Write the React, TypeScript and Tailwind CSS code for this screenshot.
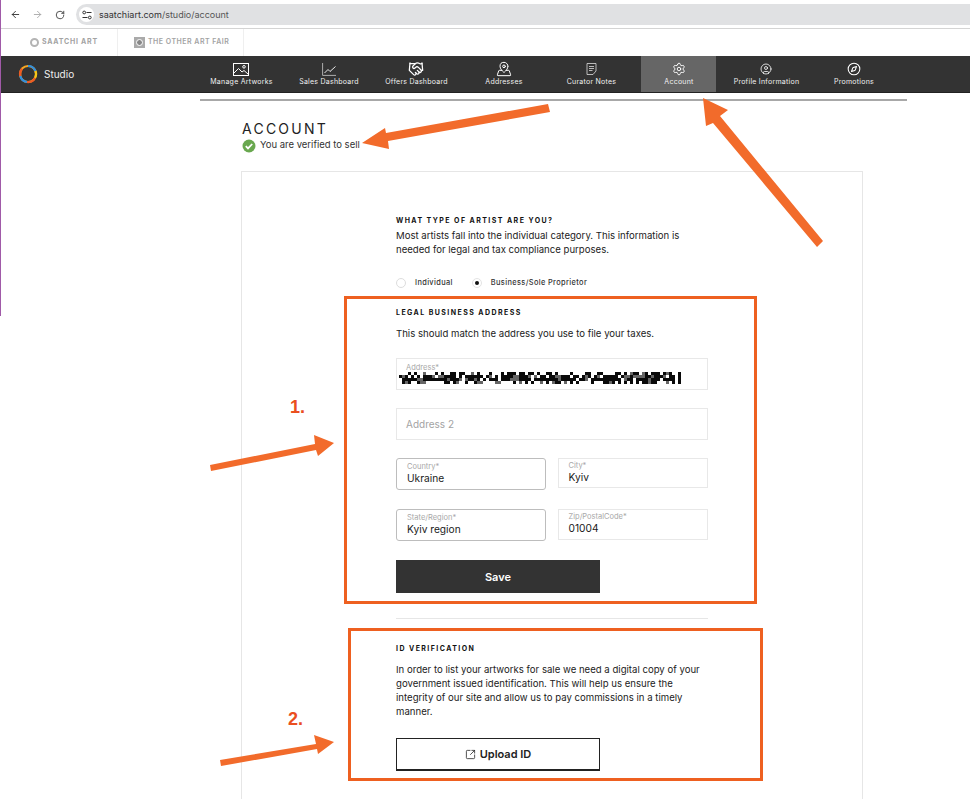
import React from "react";
import { ArrowLeft, ArrowRight, RotateCw, Handshake, MapPinned, Settings, CircleUser, Compass, SquareArrowOutUpRight } from "lucide-react";

const font = { fontFamily: "Inter, 'Liberation Sans', sans-serif" };

function ImageIcon() {
  return (
    <svg width="16" height="13" viewBox="0 0 16 13" fill="none" stroke="white" strokeWidth="1">
      <rect x="0.5" y="0.5" width="15" height="12" />
      <path d="M1 10 L5.5 5.5 L9 9 L11 7.5 L15 11" />
      <circle cx="11" cy="3.8" r="1.3" />
    </svg>
  );
}
function ChartIcon() {
  return (
    <svg width="14" height="13" viewBox="0 0 14 13" fill="none" stroke="white" strokeWidth="0.9">
      <path d="M0.6 0 V12.4 H14" stroke="#bbb" />
      <path d="M2.5 10 L6 6.5 L8 8.5 L13.5 3.5" />
    </svg>
  );
}
function NotesIcon() {
  return (
    <svg width="11" height="12" viewBox="0 0 11 12" fill="none" stroke="#ddd" strokeWidth="0.8">
      <path d="M1 0.5 H10 V8 L7 11.5 H1 Z" />
      <path d="M3 3.5 H8 M3 5.5 H8 M3 7.5 H6.5" />
    </svg>
  );
}
function TuneIcon() {
  return (
    <svg width="10" height="10" viewBox="0 0 10 10" fill="none" stroke="#333" strokeWidth="1">
      <circle cx="2.2" cy="2.5" r="1.4" />
      <path d="M4.5 2.5 H9.5 M0.5 7.5 H5.5" />
      <circle cx="7.8" cy="7.5" r="1.4" />
    </svg>
  );
}
function Logo() {
  return (
    <svg width="20" height="20" viewBox="0 0 20 20" fill="none" strokeWidth="2.2">
      <circle cx="10" cy="10" r="8" stroke="#f5a623" />
      <path d="M10 2 A8 8 0 0 1 17.5 7" stroke="#2f8fe0" />
      <path d="M17.5 7 A8 8 0 0 1 17 14" stroke="#f5c518" />
      <path d="M17 14 A8 8 0 0 1 9 18" stroke="#ee5a24" />
      <path d="M9 18 A8 8 0 0 1 2.3 12" stroke="#2f8fe0" />
      <path d="M2.3 12 A8 8 0 0 1 4 4.7" stroke="#ee5a24" />
    </svg>
  );
}

const navItems: { label: string; icon: React.ReactNode; active?: boolean }[] = [
  { label: "Manage Artworks", icon: <ImageIcon /> },
  { label: "Sales Dashboard", icon: <ChartIcon /> },
  { label: "Offers Dashboard", icon: <Handshake size={16} color="white" strokeWidth={1.9} /> },
  { label: "Addresses", icon: <MapPinned size={16} color="white" strokeWidth={1.5} /> },
  { label: "Curator Notes", icon: <NotesIcon /> },
  { label: "Account", icon: <Settings size={14} color="white" strokeWidth={1.6} />, active: true },
  { label: "Profile Information", icon: <CircleUser size={12} color="white" strokeWidth={1.6} /> },
  { label: "Promotions", icon: <Compass size={14} color="white" strokeWidth={1.8} /> },
];

function Censored() {
  const cols = 94;
  const rects: React.ReactNode[] = [];
  let seed = 17;
  for (let r = 0; r < 4; r++) {
    for (let c = 0; c < cols; c++) {
      seed = (seed * 1103515245 + 12345) & 0x7fffffff;
      const v = (seed >> 8) % 100;
      const threshold = r === 1 || r === 2 ? 84 : 50;
      if (v < threshold) rects.push(<rect key={r + "-" + c} x={c * 3} y={r * 3} width="3" height="3" fill={v % 6 === 0 ? "#666" : "#0a0a0a"} />);
    }
  }
  return (
    <svg width="282" height="12" viewBox="0 0 282 12" shapeRendering="crispEdges">
      {rects}
    </svg>
  );
}

function Field({ label, value, rounded, className }: { label: string; value: string; rounded?: boolean; className: string }) {
  return (
    <div className={`${className} flex flex-col justify-center border pb-[2px] ${rounded ? "rounded-[3px] border-[#bdbdbd] pl-[10px]" : "border-[#e8e8e8] pl-[9.5px]"}`}>
      <div className="text-[7.5px] leading-[9px] text-[#a8a8a8]">{label}</div>
      <div className="text-[10.2px] leading-[14px] text-[#1a1a1a]">{value}</div>
    </div>
  );
}

export default function App() {
  return (
    <div className="relative w-[970px] h-[799px] overflow-hidden bg-white" style={font}>
      <div className="h-[29px] flex items-center border-b border-[#d4d4d4] bg-white pl-[10px] pt-[1px]">
        <ArrowLeft size={11} color="#333" strokeWidth={2} />
        <ArrowRight size={11} color="#aaa" strokeWidth={2} className="ml-[11px]" />
        <RotateCw size={10} color="#333" strokeWidth={2} className="ml-[12px]" />
        <div className="ml-[11px] h-[21px] flex-1 flex items-center rounded-l-full bg-[#e0e1e3] pl-[3px]">
          <div className="w-[15px] h-[15px] rounded-full bg-white flex items-center justify-center"><TuneIcon /></div>
          <span className="ml-[5px] text-[9px] text-[#333]">saatchiart.com<span className="text-[#555]">/studio/account</span></span>
        </div>
      </div>

      <div className="h-[27px] flex items-stretch pl-[1px] text-[#a3a3a3]">
        <div className="w-[117px] flex items-center pl-[29px] border-r border-[#efefef]">
          <div className="w-[9px] h-[9px] rounded-full border-2 border-[#b4b4b4]" />
          <span className="ml-[3px] text-[7px] font-bold tracking-[0.11em]">SAATCHI ART</span>
        </div>
        <div className="w-[126px] flex items-center pl-[16px] border-r border-[#efefef]">
          <div className="w-[11px] h-[11px] bg-[#aaa] flex items-center justify-center"><div className="w-[7px] h-[7px] rounded-full bg-[#888] border border-white" /></div>
          <span className="ml-[3px] text-[7px] font-semibold tracking-[0.07em]">THE OTHER ART FAIR</span>
        </div>
      </div>

      <div className="h-[37px] flex items-stretch bg-[#333333] border-b border-[#222]">
        <div className="w-[203.5px] flex items-center pl-[18px]">
          <Logo />
          <span className="ml-[6px] text-[10px] text-[#eee]">Studio</span>
        </div>
        <div className="flex gap-[12.5px]">
          {navItems.map((n) => (
            <div key={n.label} className={`w-[75px] flex flex-col items-center pt-[6px] ${n.active ? "bg-[#666666]" : ""}`}>
              <div className="h-[14px] flex items-center justify-center">{n.icon}</div>
              <div className="mt-[1px] pl-[1px] text-[7px] leading-[10px] tracking-[0.035em] text-[#f0f0f0] whitespace-nowrap">{n.label}</div>
            </div>
          ))}
        </div>
      </div>

      <div className="ml-[200px] mt-[6px] w-[707px] h-[2px] bg-[#a8a8a8]" />

      <div className="pl-[242px] pt-[20px]">
        <h1 className="text-[14px] leading-[15px] tracking-[0.16em] text-[#222]">ACCOUNT</h1>
        <div className="mt-[2px] flex items-center h-[15px]">
          <svg width="14" height="14" viewBox="0 0 14 14">
            <circle cx="7" cy="7" r="6.5" fill="#69a84f" />
            <path d="M3.8 7.2 L6 9.4 L10.2 5" fill="none" stroke="white" strokeWidth="1.8" />
          </svg>
          <span className="ml-[4px] text-[9.5px] text-[#333]">You are verified to sell</span>
        </div>
      </div>

      <div className="ml-[241px] mt-[18px] w-[622px] h-[700px] border border-[#e6e6e6] pl-[154px] pt-[44px]">
        <div className="w-[312px]">
          <h2 className="text-[7px] leading-[9px] font-bold tracking-[0.205em] text-[#111]">WHAT TYPE OF ARTIST ARE YOU?</h2>
          <p className="mt-[4px] text-[9.6px] leading-[14px] text-[#222]">Most artists fall into the individual category. This information is needed for legal and tax compliance purposes.</p>
          <div className="mt-[20px] h-[12px] flex items-center text-[7.4px] tracking-[0.05em] font-medium text-[#333]">
            <div className="w-[10px] h-[10px] rounded-full border border-[#ddd]" />
            <span className="ml-[9px]">Individual</span>
            <div className="ml-[19px] w-[10px] h-[10px] rounded-full border border-[#e4e4e4] flex items-center justify-center"><div className="w-[4px] h-[4px] rounded-full bg-[#111]" /></div>
            <span className="ml-[9px]">Business/Sole Proprietor</span>
          </div>

          <h2 className="mt-[19px] text-[7px] leading-[9px] font-bold tracking-[0.205em] text-[#111]">LEGAL BUSINESS ADDRESS</h2>
          <p className="mt-[10px] text-[9.6px] leading-[14px] text-[#222]">This should match the address you use to file your taxes.</p>

          <div className="mt-[17px] h-[32px] border border-[#e8e8e8] pl-[2px] pt-[5px]">
            <div className="pl-[7px] text-[7.5px] leading-[8px] text-[#a8a8a8]">Address*</div>
            <Censored />
          </div>
          <div className="mt-[18px] h-[32px] border border-[#e8e8e8] pl-[9px] pt-[1px] flex items-center text-[10px] text-[#a3a3a3]">Address 2</div>

          <div className="mt-[18px] flex justify-between items-start">
            <Field className="w-[150px] h-[32px]" label="Country*" value="Ukraine" rounded />
            <Field className="w-[150px] h-[30px]" label="City*" value="Kyiv" />
          </div>
          <div className="mt-[19px] flex justify-between items-start">
            <Field className="w-[150px] h-[32px]" label="State/Region*" value="Kyiv region" rounded />
            <Field className="w-[150px] h-[31px]" label="Zip/PostalCode*" value="01004" />
          </div>

          <button className="mt-[19px] block w-[204px] h-[33px] pt-[2px] bg-[#333333] text-white text-[11px] font-semibold">Save</button>
          <div className="mt-[25px] h-px bg-[#e6e6e6]" />

          <h2 className="mt-[25px] text-[7px] leading-[9px] font-bold tracking-[0.205em] text-[#111]">ID VERIFICATION</h2>
          <p className="mt-[10px] text-[9.6px] leading-[14px] text-[#222]">In order to list your artworks for sale we need a digital copy of your government issued identification. This will help us ensure the integrity of our site and allow us to pay commissions in a timely manner.</p>
          <button className="mt-[19px] w-[204px] h-[33px] border border-[#222] border-b-2 flex items-center justify-center gap-[4px] text-[11px] font-semibold text-[#222]">
            <SquareArrowOutUpRight size={11} strokeWidth={1.7} />
            Upload ID
          </button>
        </div>
      </div>

      {/* annotations laid over the screenshot */}
      <div className="absolute left-0 top-0 w-px h-[316px] bg-[#a05aa8]" />
      <div className="absolute left-[344px] top-[296px] w-[413px] h-[308px] border-[3px] border-[#ee6020]" />
      <div className="absolute left-[348px] top-[628px] w-[415px] h-[153px] border-[3px] border-[#ee6020]" />
      <div className="absolute left-[290px] top-[394px] text-[18px] font-bold text-[#ea4f1f]" style={{ fontFamily: "'Liberation Sans', sans-serif" }}>1.</div>
      <div className="absolute left-[288px] top-[706px] text-[18px] font-bold text-[#ea4f1f]" style={{ fontFamily: "'Liberation Sans', sans-serif" }}>2.</div>
      <svg className="absolute left-0 top-0" width="970" height="799" viewBox="0 0 970 799" fill="#f26b2b">
        <polygon points="548,104 550,112 388,141 389,149 362,143 385,128 386,133" />
        <polygon points="703,98 728,110 720,116 823,241 817,247 713,123 706,126" />
        <polygon points="210,465 315,444 314,435 334,443 318,456 316,450 211,471" />
        <polygon points="220,760 316,744 314,735 334,742 318,754 317,749 221,766" />
      </svg>
    </div>
  );
}
